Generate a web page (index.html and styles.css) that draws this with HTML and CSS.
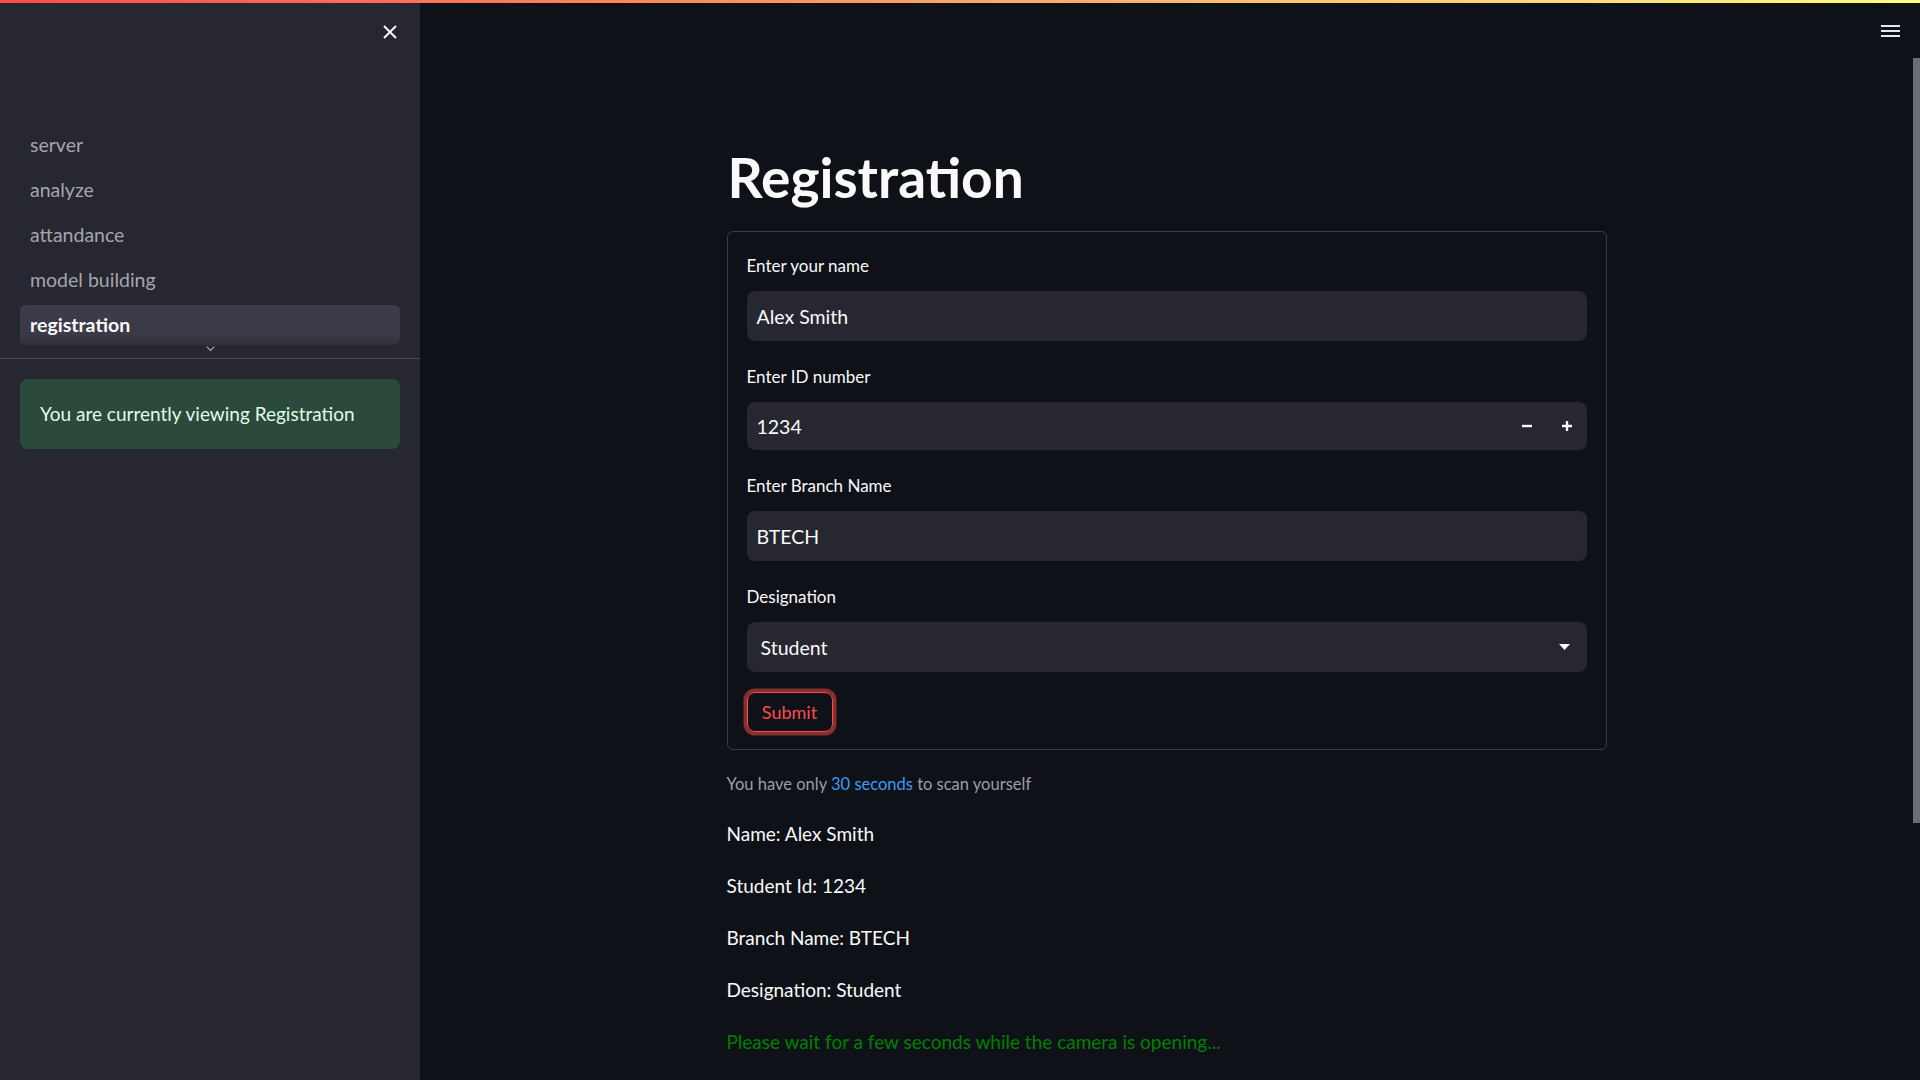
FILE: index.html
```html
<!DOCTYPE html>
<html lang="en">
<head>
<meta charset="utf-8">
<title>Registration</title>
<link rel="stylesheet" href="styles.css">
</head>
<body>
<div class="decoration"></div>
<aside class="sidebar">
  <div class="sidebar-header">
    <button class="close-btn" aria-label="Close sidebar">
      <svg width="14" height="14" viewBox="0 0 14 14"><path d="M1 1L13 13M13 1L1 13" stroke="#fafafa" stroke-width="2"/></svg>
    </button>
  </div>
  <nav class="nav">
    <ul class="nav-list">
      <li class="nav-item">server</li>
      <li class="nav-item">analyze</li>
      <li class="nav-item">attandance</li>
      <li class="nav-item">model building</li>
      <li class="nav-item active">registration</li>
    </ul>
    <div class="nav-more">
      <svg width="9" height="6" viewBox="0 0 9 6"><path d="M0.7 0.7L4.5 4.5L8.3 0.7" fill="none" stroke="#a5a6ab" stroke-width="1.2"/></svg>
    </div>
  </nav>
  <div class="sidebar-content">
    <div class="alert-success">You are currently viewing Registration</div>
  </div>
</aside>
<main class="main">
  <button class="menu-btn" aria-label="Menu">
    <svg width="19" height="14" viewBox="0 0 19 14"><rect x="0" y="1" width="19" height="2" fill="#e8e8e8"/><rect x="0" y="6" width="19" height="2" fill="#e8e8e8"/><rect x="0" y="11" width="19" height="2" fill="#e8e8e8"/></svg>
  </button>
  <div class="scroll-thumb"></div>
  <div class="block">
    <h1 class="title">Registration</h1>
    <form class="form">
      <div class="widget">
        <label class="label">Enter your name</label>
        <div class="input">Alex Smith</div>
      </div>
      <div class="widget">
        <label class="label">Enter ID number</label>
        <div class="input number">
          <span class="value">1234</span>
          <span class="step-btn"><svg width="10" height="10" viewBox="0 0 10 10"><path d="M0 5H10" stroke="#fafafa" stroke-width="2.4"/></svg></span>
          <span class="step-btn"><svg width="10" height="10" viewBox="0 0 10 10"><path d="M0 5H10M5 0V10" stroke="#fafafa" stroke-width="2.4"/></svg></span>
        </div>
      </div>
      <div class="widget">
        <label class="label">Enter Branch Name</label>
        <div class="input">BTECH</div>
      </div>
      <div class="widget">
        <label class="label">Designation</label>
        <div class="input select">
          <span class="value">Student</span>
          <svg width="11" height="6" viewBox="0 0 11 6"><path d="M0 0H11L5.5 6Z" fill="#fafafa"/></svg>
        </div>
      </div>
      <div class="actions">
        <button type="button" class="submit-btn">Submit</button>
      </div>
    </form>
    <p class="caption">You have only <span class="blue">30 seconds</span> to scan yourself</p>
    <p class="text">Name: Alex Smith</p>
    <p class="text">Student Id: 1234</p>
    <p class="text">Branch Name: BTECH</p>
    <p class="text">Designation: Student</p>
    <p class="text green">Please wait for a few seconds while the camera is opening...</p>
  </div>
</main>
</body>
</html>
```

FILE: styles.css
```css
* { box-sizing: border-box; }
html, body { margin: 0; height: 100%; }
body {
  display: flex;
  background: #0e1117;
  color: #fafafa;
  font-family: "Lato", "Noto Sans", sans-serif;
  overflow: hidden;
  position: relative;
}
.decoration {
  position: absolute;
  top: 0; left: 0; right: 0;
  height: 3px;
  background: linear-gradient(90deg, #ff4b4b, #fffd80);
  z-index: 10;
}
.sidebar {
  width: 420px;
  flex: none;
  height: 100vh;
  background: #262730;
  display: flex;
  flex-direction: column;
}
.sidebar-header {
  height: 64px;
  display: flex;
  align-items: center;
  justify-content: flex-end;
  padding-right: 23px;
}
.close-btn {
  background: none;
  border: 0;
  padding: 0;
  width: 14px;
  height: 14px;
  display: flex;
}
.nav {
  padding-top: 61px;
  border-bottom: 1px solid #4b4c55;
}
.nav-list {
  list-style: none;
  margin: 0;
  padding: 0 20px;
  display: flex;
  flex-direction: column;
  gap: 5px;
}
.nav-item {
  height: 40px;
  line-height: 40px;
  padding-left: 10px;
  border-radius: 6px;
  font-size: 19.5px;
  color: #a5a6ab;
}
.nav-item.active {
  background: linear-gradient(180deg, #3b3c48 0%, #3a3b47 70%, #31323d 100%);
  color: #fafafa;
  font-weight: 700;
}
.nav-more {
  height: 13px;
  display: flex;
  justify-content: center;
  align-items: flex-start;
  padding-top: 1px;
}
.sidebar-content { padding: 20px; }
.alert-success {
  background: #2b4a3b;
  color: #dffde9;
  border-radius: 8px;
  padding: 19px 20px;
  font-size: 19px;
  line-height: 32px;
}
.main {
  flex: 1;
  position: relative;
  height: 100vh;
  padding-right: 7px;
}
.menu-btn {
  position: absolute;
  top: 24px;
  right: 20px;
  background: none;
  border: 0;
  padding: 0;
  display: flex;
}
.scroll-thumb {
  position: absolute;
  top: 58px;
  right: 0;
  width: 7px;
  height: 765px;
  background: #6c6d72;
}
.block {
  width: 880px;
  margin: 0 auto;
  padding-top: 144px;
  display: flex;
  flex-direction: column;
  gap: 20px;
}
.title {
  margin: 0 0 1px 1px;
  font-size: 55px;
  line-height: 66px;
  font-weight: 700;
}
.form {
  margin: 0;
  border: 1px solid #3b3d43;
  border-radius: 6px;
  padding: 20px 19px 17px;
  display: flex;
  flex-direction: column;
  gap: 22px;
}
.widget { display: flex; flex-direction: column; }
.label {
  font-size: 17px;
  line-height: 28px;
  margin-bottom: 11px;
}
.input {
  height: 50px;
  background: #262730;
  border-radius: 8px;
  padding: 0 10px;
  display: flex;
  align-items: center;
  font-size: 19.5px;
}
.input.number { height: 48px; padding-right: 0; }
.input.number .value { flex: 1; }
.step-btn {
  width: 40px;
  height: 100%;
  display: flex;
  align-items: center;
  justify-content: center;
}
.input.select {
  padding: 0 17px 0 14px;
  justify-content: space-between;
}
.actions { display: flex; margin-top: -2px; }
.submit-btn {
  width: 86px;
  height: 40px;
  background: transparent;
  border: 1px solid #ff4b4b;
  border-radius: 8px;
  color: #ff4b4b;
  font-family: inherit;
  font-size: 18px;
  box-shadow: 0 0 0 3.5px rgba(255, 75, 75, 0.5);
  padding: 0;
}
.caption {
  margin: 0;
  font-size: 16.5px;
  line-height: 28px;
  color: #9d9ea3;
}
.blue { color: #3d9df3; }
.text {
  margin: 0;
  font-size: 19px;
  line-height: 32px;
}
.green { color: #008000; }
```
